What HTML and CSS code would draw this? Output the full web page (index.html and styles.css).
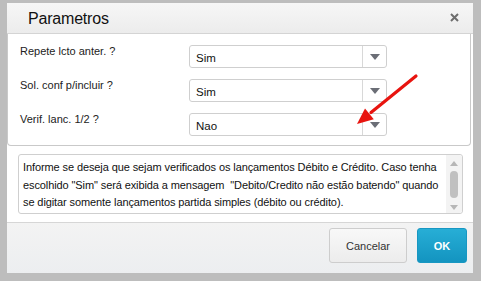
FILE: index.html
```html
<!DOCTYPE html>
<html lang="pt">
<head>
    <meta charset="UTF-8">
    <title>Parametros</title>
    <link rel="stylesheet" href="styles.css">
</head>
<body>
    <div class="dialog">
        <div class="dialog-header">
            <span class="dialog-title">Parametros</span>
            <svg class="close" width="9" height="9" viewBox="0 0 9 9">
                <path d="M1 1 L8 8 M8 1 L1 8" stroke="#6d6d6d" stroke-width="2"/>
            </svg>
        </div>

        <div class="params">
            <div class="param-row">
                <label>Repete lcto anter. ?</label>
                <div class="select"><span>Sim</span><i class="caret"></i></div>
            </div>
            <div class="param-row">
                <label>Sol. conf p/incluir ?</label>
                <div class="select"><span>Sim</span><i class="caret"></i></div>
            </div>
            <div class="param-row">
                <label>Verif. lanc. 1/2 ?</label>
                <div class="select"><span>Nao</span><i class="caret"></i></div>
            </div>
        </div>

        <div class="help">
            <p>Informe se deseja que sejam verificados os lançamentos Débito e Crédito. Caso tenha escolhido "Sim" será exibida a mensagem &nbsp;"Debito/Credito não estão batendo" quando se digitar somente lançamentos partida simples (débito ou crédito).</p>
            <div class="scrollbar">
                <i class="sb-up"></i>
                <i class="sb-thumb"></i>
                <i class="sb-down"></i>
            </div>
        </div>

        <div class="dialog-footer">
            <button class="btn btn-cancel">Cancelar</button>
            <button class="btn btn-ok">OK</button>
        </div>
    </div>

    <svg class="pointer" width="70" height="62" viewBox="0 0 70 62">
        <path d="M64 10 L19 46.6" stroke="#e8140f" stroke-width="3.2" stroke-linecap="round"/>
        <path d="M5 58 L13 42.5 L21.8 53.3 Z" fill="#e8140f"/>
    </svg>
</body>
</html>
```

FILE: styles.css
```css
body {
    margin: 0;
    background-color: #bdbdbd;
    font-family: "Liberation Sans", Arial, sans-serif;
    width: 481px;
    height: 281px;
    overflow: hidden;
    position: relative;
}
.dialog {
    margin: 3px 8px 0 7px;
    height: 270px;
    background-color: #fff;
    display: flex;
    flex-direction: column;
}
.dialog-header {
    height: 30px;
    padding: 0 14px 0 21px;
    display: flex;
    align-items: center;
    justify-content: space-between;
    background: linear-gradient(#f6f6f6, #ececec);
    border-bottom: 1px solid #d4d4d4;
}
.dialog-title {
    font-size: 16px;
    letter-spacing: -0.2px;
    color: #111;
    padding-top: 2px;
}
.close {
    margin-top: -2px;
}
.params {
    height: 112px;
    box-sizing: border-box;
    margin-right: 2px;
    padding: 11px 0 0 12px;
    border: 1px solid #c9c9c9;
    border-top: none;
    border-radius: 0 0 4px 4px;
    display: flex;
    flex-direction: column;
    gap: 11px;
}
.param-row {
    display: grid;
    grid-template-columns: 169px 198px;
}
.param-row label {
    font-size: 11px;
    line-height: 14px;
    color: #222;
    margin-top: -1px;
}
.select {
    height: 23px;
    box-sizing: border-box;
    border: 1px solid #cfcfcf;
    border-radius: 3px;
    display: flex;
    align-items: center;
    font-size: 11.5px;
    color: #111;
}
.select span {
    flex: 1;
    padding-left: 6px;
    padding-top: 2px;
}
.caret {
    width: 23px;
    height: 100%;
    border-left: 1px solid #d8d8d8;
    display: flex;
    align-items: center;
    justify-content: center;
}
.caret::after {
    content: "";
    border-left: 5px solid transparent;
    border-right: 5px solid transparent;
    border-top: 6px solid #6b6e76;
}
.help {
    margin: 8px 10px 8px 11px;
    height: 60px;
    box-sizing: border-box;
    border: 1px solid #cfcfcf;
    border-radius: 3px;
    display: flex;
}
.help p {
    flex: 1;
    margin: 0;
    padding: 4px 0 0 4px;
    font-size: 11px;
    letter-spacing: -0.1px;
    line-height: 17.5px;
    color: #111;
    height: 100%;
    box-sizing: border-box;
    overflow: hidden;
}
.scrollbar {
    width: 16px;
    background-color: #f3f3f3;
    display: flex;
    flex-direction: column;
    align-items: center;
    padding: 6px 0 3px;
    box-sizing: border-box;
    border-radius: 0 3px 3px 0;
}
.sb-up, .sb-down {
    width: 0;
    height: 0;
    border-left: 4px solid transparent;
    border-right: 4px solid transparent;
}
.sb-up {
    border-bottom: 5px solid #b6b6b6;
}
.sb-down {
    border-top: 5px solid #b6b6b6;
}
.sb-thumb {
    width: 8px;
    height: 28px;
    margin: 5px 0 7px;
    background-color: #c0c0c0;
    border-radius: 4px;
}
.dialog-footer {
    flex: 1;
    border-top: 1px solid #d6d6d6;
    background: linear-gradient(#f3f3f3, #eceef0);
    display: flex;
    justify-content: flex-end;
    align-items: flex-start;
    gap: 10px;
    padding: 5px 6px 0 0;
}
.btn {
    height: 35px;
    border-radius: 3px;
    font-family: "Liberation Sans", Arial, sans-serif;
    font-size: 11px;
    cursor: pointer;
}
.btn-cancel {
    width: 78px;
    border: 1px solid #cdcdcd;
    background: linear-gradient(#f8f8f8, #ececec);
    color: #333;
}
.btn-ok {
    width: 50px;
    border: 1px solid #1797c2;
    background: linear-gradient(#27aed6, #1394c0);
    color: #fff;
    font-weight: bold;
}
.pointer {
    position: absolute;
    left: 352px;
    top: 66px;
}
```
